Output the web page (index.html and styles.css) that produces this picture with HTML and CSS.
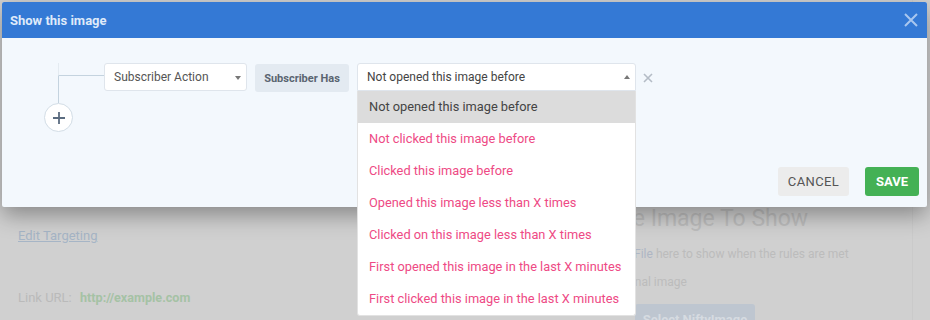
FILE: index.html
```html
<!DOCTYPE html>
<html lang="en">
<head>
    <meta charset="UTF-8">
    <meta name="viewport" content="width=device-width, initial-scale=1.0">
    <title>Show this image</title>
    <link rel="stylesheet" href="styles.css">
</head>
<body>
    <div class="page">
        <div class="page-left">
            <a href="#" class="edit-link">Edit Targeting</a>
            <div class="link-row">
                <span class="link-label">Link URL:</span>
                <span class="link-value">http://example.com</span>
            </div>
        </div>
        <div class="page-right">
            <h2>Choose Image To Show</h2>
            <p class="hint hint-upload">Upload a <span class="hint-file">File</span> here to show when the rules are met</p>
            <p class="hint hint-original">Or use the original image</p>
            <div class="select-row">
                <button class="nifty-button">Select NiftyImage</button>
            </div>
        </div>
    </div>

    <div class="modal">
        <div class="modal-header">
            <h1>Show this image</h1>
            <span class="modal-close">
                <svg width="14" height="14" viewBox="0 0 14 14"><path d="M1 1L13 13M13 1L1 13" stroke="currentColor" stroke-width="2"/></svg>
            </span>
        </div>
        <div class="modal-body">
            <div class="rule-tree">
                <div class="tree-branch"></div>
                <div class="tree-stem"></div>
                <button class="add-rule">
                    <svg width="14" height="14" viewBox="0 0 14 14"><path d="M7 1V13M1 7H13" stroke="currentColor" stroke-width="1.8"/></svg>
                </button>
            </div>
            <div class="rule-row">
                <div class="select select-action">
                    <span>Subscriber Action</span>
                    <span class="caret-down"></span>
                </div>
                <div class="rule-label">Subscriber Has</div>
                <div class="dropdown">
                    <div class="select select-open">
                        <span>Not opened this image before</span>
                        <span class="caret-up"></span>
                    </div>
                    <ul class="menu">
                        <li class="active">Not opened this image before</li>
                        <li>Not clicked this image before</li>
                        <li>Clicked this image before</li>
                        <li>Opened this image less than X times</li>
                        <li>Clicked on this image less than X times</li>
                        <li>First opened this image in the last X minutes</li>
                        <li>First clicked this image in the last X minutes</li>
                    </ul>
                </div>
                <span class="remove-rule">
                    <svg width="10" height="10" viewBox="0 0 10 10"><path d="M1 1L9 9M9 1L1 9" stroke="currentColor" stroke-width="1.6"/></svg>
                </span>
            </div>
            <div class="modal-actions">
                <button class="btn btn-cancel">Cancel</button>
                <button class="btn btn-save">Save</button>
            </div>
        </div>
    </div>
</body>
</html>
```

FILE: styles.css
```css
* {
    box-sizing: border-box;
}
body {
    font-family: Roboto, 'Liberation Sans', sans-serif;
    margin: 0;
    padding: 0;
    background-color: #d0d0d0;
    width: 930px;
    height: 320px;
    overflow: hidden;
    position: relative;
}

/* page under the overlay */
.page {
    display: grid;
    grid-template-columns: 560px 1fr;
    padding: 228px 0 0 18px;
    border-right: 1px solid #cacaca;
    width: 913px;
    height: 320px;
}
.edit-link {
    display: block;
    color: #a6b5c6;
    font-size: 13px;
    line-height: 16px;
}
.link-row {
    margin-top: 46px;
    font-size: 13px;
    line-height: 16px;
}
.link-label {
    color: #bababa;
    margin-right: 5px;
}
.link-value {
    color: #a5c2a5;
    font-weight: 700;
    font-size: 12.6px;
}
.page-right h2 {
    margin: -24px 0 0 -11px;
    font-size: 23px;
    font-weight: 400;
    line-height: 30px;
    color: #bdbdbd;
}
.hint {
    margin: 12px 0 0;
    font-size: 12px;
    line-height: 16px;
    color: #bcbcbc;
}
.hint-upload {
    margin-left: 6px;
}
.hint-file {
    color: #aeb6c4;
}
.hint-original {
    margin-left: -24px;
}
.select-row {
    padding-left: 57px;
    margin-top: 14px;
}
.nifty-button {
    border: none;
    border-radius: 3px;
    background-color: #bec6d0;
    color: #d6dbe1;
    font-family: inherit;
    font-weight: 700;
    font-size: 13px;
    width: 120px;
    height: 30px;
}

/* modal */
.modal {
    position: absolute;
    left: 2px;
    top: 2px;
    width: 925px;
    height: 205px;
    background-color: #f3f8fd;
    border-radius: 2px;
    box-shadow: 0 8px 22px rgba(0, 0, 0, 0.35);
}
.modal-header {
    display: flex;
    justify-content: space-between;
    align-items: center;
    height: 36px;
    padding: 0 9px 0 8px;
    background-color: #3479d5;
    border-radius: 2px 2px 0 0;
}
.modal-header h1 {
    margin: 0;
    font-size: 13px;
    font-weight: 700;
    color: #dfeafa;
}
.modal-close {
    display: flex;
    color: #a9c7ef;
}
.modal-body {
    position: relative;
    padding: 25px 8px 0 102px;
    height: 169px;
}
.rule-tree {
    position: absolute;
    left: 42px;
    top: 25px;
}
.tree-branch {
    margin-left: 14px;
    width: 46px;
    height: 13px;
    border-left: 1px solid #e4ebf1;
    border-bottom: 1px solid #c4d3df;
}
.tree-stem {
    margin-left: 14px;
    height: 27px;
    border-left: 1px solid #c4d3df;
}
.add-rule {
    display: flex;
    align-items: center;
    justify-content: center;
    width: 29px;
    height: 29px;
    padding: 0;
    border: 1px solid #d2dde6;
    border-radius: 50%;
    background-color: white;
    color: #5b6c80;
}
.rule-row {
    display: flex;
    align-items: flex-start;
    gap: 8px;
}
.select {
    display: flex;
    align-items: center;
    justify-content: space-between;
    height: 28px;
    padding: 0 5px 0 9px;
    background-color: white;
    border: 1px solid #dfe5ec;
    border-radius: 3px;
    font-size: 12px;
    color: #555;
}
.select-action {
    width: 143px;
}
.caret-down {
    width: 0;
    height: 0;
    border-left: 3.5px solid transparent;
    border-right: 3.5px solid transparent;
    border-top: 4px solid #777;
    margin-top: 2px;
}
.caret-up {
    width: 0;
    height: 0;
    border-left: 3.5px solid transparent;
    border-right: 3.5px solid transparent;
    border-bottom: 4px solid #777;
}
.rule-label {
    display: flex;
    align-items: center;
    justify-content: center;
    width: 94px;
    height: 28px;
    margin-top: 1px;
    background-color: #e3eaf1;
    border-radius: 3px;
    font-size: 11px;
    font-weight: 700;
    color: #5a6470;
}
.dropdown {
    position: relative;
    width: 279px;
}
.select-open {
    color: #444;
    border-radius: 3px 3px 0 0;
}
.menu {
    position: absolute;
    top: 28px;
    left: 0;
    width: 279px;
    margin: 0;
    padding: 0;
    list-style: none;
    background-color: white;
    border: 1px solid #e2e2e2;
    border-top: none;
    border-radius: 0 0 3px 3px;
    z-index: 2;
}
.menu li {
    height: 32px;
    line-height: 32px;
    padding-left: 11px;
    font-size: 12.8px;
    color: #ee4a85;
}
.menu li.active {
    background-color: #dcdcdc;
    color: #444;
}
.remove-rule {
    display: flex;
    color: #b4bcc6;
    margin: 10px 0 0 -1px;
}
.modal-actions {
    position: absolute;
    right: 8px;
    bottom: 11px;
    display: flex;
    gap: 16px;
}
.btn {
    height: 29px;
    border: none;
    border-radius: 3px;
    font-family: inherit;
    font-size: 13px;
    text-transform: uppercase;
    cursor: pointer;
}
.btn-cancel {
    width: 71px;
    background-color: #ececec;
    color: #555;
    letter-spacing: 0.4px;
}
.btn-save {
    width: 54px;
    background-color: #44b155;
    color: white;
    font-weight: 700;
}
```
